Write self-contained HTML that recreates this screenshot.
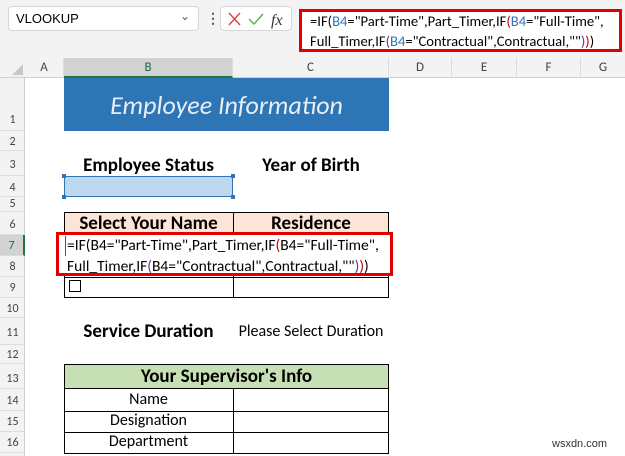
<!DOCTYPE html><html><head><style>
*{margin:0;padding:0;box-sizing:border-box}
body{width:625px;height:456px;overflow:hidden;background:#fff;font-family:Calibri,Carlito,"Liberation Sans",sans-serif;position:relative}
.a{position:absolute}
.rh{position:absolute;left:0;width:25px;text-align:center;font-size:12px;color:#444;border-bottom:1px solid #dcdcdc}
.ch{position:absolute;top:58px;height:20px;text-align:center;font-size:13px;color:#444;line-height:20px;border-right:1px solid #dcdcdc}
.t{position:absolute;text-align:center;font-size:16px;white-space:nowrap}
.b{font-weight:bold;font-size:19px}
.bl{color:#2e75b6}.pu{color:#7030a0}.rd{color:#c00000}
</style></head><body>
<div class="a" style="left:0;top:0;width:625px;height:58px;background:#f3f3f3"></div>
<div class="a" style="left:8px;top:6px;width:191px;height:25px;background:#fff;border:1px solid #d6d6d6;border-radius:4px;font-size:13px;line-height:23px;padding-left:7px;font-family:'Liberation Sans',sans-serif">VLOOKUP<span style="position:absolute;right:8px;top:-2px;color:#555;font-size:12px">&#8964;</span></div>
<div class="a" style="left:206px;top:10px;font-size:14px;color:#555;font-weight:bold">&#8942;</div>
<div class="a" style="left:220px;top:6px;width:72px;height:25px;background:#fff;border:1px solid #d6d6d6;border-radius:4px">
<svg width="72" height="25" style="position:absolute;left:0;top:0"><path d="M8 6 L19 18 M19 6 L8 18" stroke="#e04040" stroke-width="1.4"/><path d="M28 12 L33 17 L42 7" stroke="#4caf50" stroke-width="1.4" fill="none"/><text x="50" y="18" font-family="Liberation Serif" font-style="italic" font-size="16" fill="#333">fx</text></svg></div>
<div class="a" style="left:299px;top:9px;width:323px;height:43px;border:3px solid #e00000;background:#fff"></div>
<div class="a" style="left:310px;top:11px;font-size:14.6px;line-height:20px;white-space:nowrap">=IF(<span class="bl">B4</span>="Part-Time",Part_Timer,IF<span class="rd">(</span><span class="bl">B4</span>="Full-Time",<br>Full_Timer,IF<span class="pu">(</span><span class="bl">B4</span>="Contractual",Contractual,""<span class="pu">)</span><span class="rd">)</span>)</div>
<div class="a" style="left:0;top:58px;width:625px;height:20px;background:#f3f3f3;border-bottom:1px solid #d0d0d0"></div>
<svg class="a" style="left:12px;top:64px" width="12" height="12"><path d="M11 0 L11 11 L0 11Z" fill="#c8c8c8"/></svg>
<div class="ch" style="left:25px;width:39px">A</div>
<div class="ch" style="left:64px;width:169px;background:#d2d2d2;color:#1d6b3a;border-bottom:2px solid #217346;height:20px">B</div>
<div class="ch" style="left:233px;width:156px">C</div>
<div class="ch" style="left:389px;width:63px">D</div>
<div class="ch" style="left:452px;width:65px">E</div>
<div class="ch" style="left:517px;width:64px">F</div>
<div class="ch" style="left:581px;width:44px;border:none">G</div>
<div class="a" style="left:0;top:78px;width:25px;height:378px;background:#f3f3f3;border-right:1px solid #d0d0d0"></div>
<div class="rh" style="top:78px;height:53px;line-height:84px">1</div>
<div class="rh" style="top:131px;height:20px;line-height:22px">2</div>
<div class="rh" style="top:151px;height:25px;line-height:28px">3</div>
<div class="rh" style="top:176px;height:21px;line-height:24px">4</div>
<div class="rh" style="top:197px;height:15px;line-height:15px">5</div>
<div class="rh" style="top:212px;height:23px;line-height:26px">6</div>
<div class="rh" style="top:235px;height:21px;line-height:22px;background:#d2d2d2;color:#1d6b3a;border-right:2px solid #217346">7</div>
<div class="rh" style="top:256px;height:21px;line-height:22px">8</div>
<div class="rh" style="top:277px;height:21px;line-height:22px">9</div>
<div class="rh" style="top:298px;height:20px;line-height:22px">10</div>
<div class="rh" style="top:318px;height:27px;line-height:30px">11</div>
<div class="rh" style="top:345px;height:19px;line-height:20px">12</div>
<div class="rh" style="top:364px;height:25px;line-height:30px">13</div>
<div class="rh" style="top:389px;height:22px;line-height:24px">14</div>
<div class="rh" style="top:411px;height:21px;line-height:23px">15</div>
<div class="rh" style="top:432px;height:21px;line-height:23px">16</div>
<div class="a" style="left:64px;top:78px;width:325px;height:53px;background:#2e75b6;color:#e8eef7;font-style:italic;font-size:26px;text-align:center;line-height:55px">Employee Information</div>
<div class="t b" style="left:64px;width:169px;top:154px">Employee Status</div>
<div class="t b" style="left:233px;width:156px;top:154px">Year of Birth</div>
<div class="a" style="left:64px;top:176px;width:169px;height:21px;background:#bdd7ee;border:1.5px solid #2e75b6"></div>
<div class="a" style="left:62px;top:174px;width:4px;height:4px;background:#2e75b6"></div>
<div class="a" style="left:231px;top:174px;width:4px;height:4px;background:#2e75b6"></div>
<div class="a" style="left:62px;top:195px;width:4px;height:4px;background:#2e75b6"></div>
<div class="a" style="left:231px;top:195px;width:4px;height:4px;background:#2e75b6"></div>
<div class="a" style="left:64px;top:212px;width:325px;height:86px;border:1px solid #000"></div>
<div class="a" style="left:65px;top:213px;width:323px;height:22px;background:#fce4d6"></div>
<div class="a" style="left:233px;top:212px;width:1px;height:86px;background:#000"></div>
<div class="a" style="left:64px;top:277px;width:325px;height:1px;background:#000"></div>
<div class="t b" style="left:64px;width:169px;top:212px">Select Your Name</div>
<div class="t b" style="left:233px;width:156px;top:212px">Residence</div>
<div class="a" style="left:56px;top:232px;width:337px;height:44px;border:3px solid #e00000;background:#fff"></div>
<div class="a" style="left:65px;top:236px;width:1px;height:20px;background:#217346"></div>
<div class="a" style="left:67px;top:235px;font-size:15.5px;line-height:21px;white-space:nowrap">=IF(B4="Part-Time",Part_Timer,IF<span class="rd">(</span>B4="Full-Time",<br>Full_Timer,IF<span class="pu">(</span>B4="Contractual",Contractual,""<span class="pu">)</span><span class="rd">)</span>)</div>
<div class="a" style="left:69px;top:280px;width:12px;height:12px;border:1px solid #000"></div>
<div class="t b" style="left:64px;width:169px;top:320px">Service Duration</div>
<div class="t" style="left:233px;width:156px;top:322px">Please Select Duration</div>
<div class="a" style="left:64px;top:364px;width:325px;height:90px;border:1px solid #000"></div>
<div class="a" style="left:65px;top:365px;width:323px;height:24px;background:#c6e0b4;border-bottom:1px solid #000"></div>
<div class="a" style="left:233px;top:389px;width:1px;height:65px;background:#000"></div>
<div class="a" style="left:64px;top:411px;width:325px;height:1px;background:#000"></div>
<div class="a" style="left:64px;top:432px;width:325px;height:1px;background:#000"></div>
<div class="t b" style="left:64px;width:325px;top:365px">Your Supervisor's Info</div>
<div class="t" style="left:64px;width:169px;top:390px">Name</div>
<div class="t" style="left:64px;width:169px;top:411px">Designation</div>
<div class="t" style="left:64px;width:169px;top:432px">Department</div>
<div class="a" style="left:552px;top:438px;font-size:11px;color:#333;font-family:'Liberation Sans',sans-serif">wsxdn.com</div>
</body></html>
